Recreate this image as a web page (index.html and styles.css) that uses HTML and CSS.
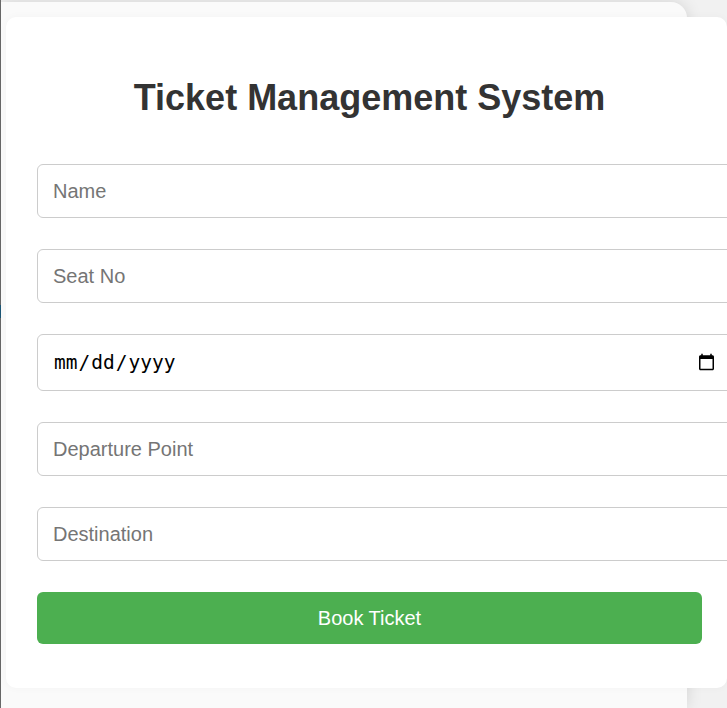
FILE: index.html
```html
<!DOCTYPE html>
<html lang="en">
<head>
<meta charset="utf-8">
<title>Ticket Management System</title>
<link rel="stylesheet" href="styles.css">
</head>
<body>
<div class="frame">
  <div class="card">
    <div class="form-box">
      <h2 class="title">Ticket Management System</h2>
      <form class="form">
        <input class="field" type="text" placeholder="Name">
        <input class="field" type="text" placeholder="Seat No">
        <input class="field field-date" type="date">
        <input class="field" type="text" placeholder="Departure Point">
        <input class="field" type="text" placeholder="Destination">
        <button class="btn" type="button">Book Ticket</button>
      </form>
    </div>
  </div>
</div>
</body>
</html>
```
FILE: styles.css
```css
html, body {
  margin: 0;
  padding: 0;
  height: 708px;
  background: #f1f1f1;
  overflow: hidden;
  font-family: "Liberation Sans", Arial, sans-serif;
}
.frame {
  display: flex;
  height: 708px;
  padding-left: 1px;
  box-sizing: border-box;
  background: linear-gradient(to bottom, #6d6d6d 305px, #1d5b7c 305px, #1d5b7c 318px, #6d6d6d 318px) no-repeat 0 0 / 1px 100%;
}
.card {
  box-sizing: border-box;
  margin-top: 2px;
  width: 686px;
  height: 706px;
  padding: 15px 0 0 5px;
  background: #fafafa;
  border-radius: 0 16px 0 0;
  box-shadow: 0 0 16px rgba(0, 0, 0, 0.13);
}
.form-box {
  width: 665px;
  padding: 29px 25px 44px 31px;
  background: #fff;
  border-radius: 10px;
  box-shadow: 0 0 8px rgba(0, 0, 0, 0.03);
}
.title {
  margin: 31px 0 46px;
  font-size: 36px;
  line-height: 41px;
  font-weight: bold;
  color: #333;
  text-align: center;
}
.form {
  display: flex;
  flex-direction: column;
  align-items: flex-start;
}
.field {
  display: block;
  box-sizing: content-box;
  width: 100%;
  height: 22px;
  margin: 0 0 31px;
  padding: 15px;
  border: 1px solid #ccc;
  border-radius: 6px;
  font-family: "Liberation Sans", Arial, sans-serif;
  font-size: 20px;
  color: #000;
  background: #fff;
  outline: none;
}
.field::placeholder {
  color: #757575;
}
.field-date {
  height: 25px;
  font-family: "DejaVu Sans Mono", monospace;
  font-size: 19.5px;
}
.btn {
  display: block;
  width: 665px;
  height: 52px;
  padding: 0;
  border: none;
  border-radius: 6px;
  background: #4caf50;
  color: #fff;
  font-family: "Liberation Sans", Arial, sans-serif;
  font-size: 20px;
  cursor: pointer;
}
```
